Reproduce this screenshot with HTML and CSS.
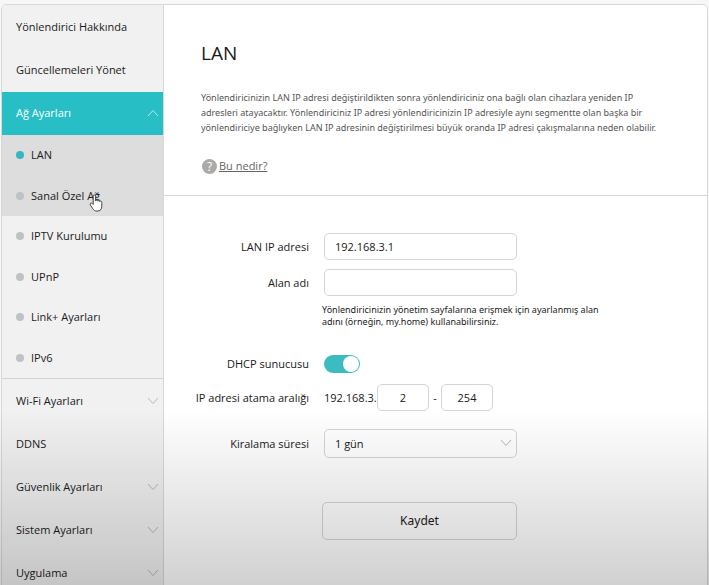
FILE: index.html
```html
<!DOCTYPE html>
<html lang="tr">
<head>
<meta charset="utf-8">
<meta name="viewport" content="width=device-width, initial-scale=1">
<title>LAN</title>
<link rel="stylesheet" href="styles.css">
</head>
<body>
<div class="panel">
  <nav class="sidebar">
    <ul class="menu menu-top">
      <li><a class="menu-link" href="#about">Yönlendirici Hakkında</a></li>
      <li><a class="menu-link" href="#updates">Güncellemeleri Yönet</a></li>
      <li><a class="menu-link active" href="#network">Ağ Ayarları
        <svg class="chevron" viewBox="0 0 12 8"><path d="M1 7 6 1.5 11 7"/></svg></a></li>
    </ul>
    <ul class="menu submenu">
      <li class="shaded"><a class="sub-link current" href="#lan">LAN</a></li>
      <li class="shaded"><a class="sub-link" href="#vpn">Sanal Özel Ağ</a>
        <svg class="pointer" viewBox="0 0 14 18"><path d="M4.2 10.5V2.2C4.2.6 6.6.6 6.6 2.2V7c0-1.2 2.1-1.1 2.1.2.2-1 2.1-.9 2.1.4.3-.9 2-.7 2 .7v3.9c0 3-1.5 4.9-4.6 4.9-2.3 0-3.6-1-4.6-2.7L1.3 10.9C.5 9.6 2.1 8.4 3.2 9.5z"/></svg></li>
      <li><a class="sub-link" href="#iptv">IPTV Kurulumu</a></li>
      <li><a class="sub-link" href="#upnp">UPnP</a></li>
      <li><a class="sub-link" href="#link">Link+ Ayarları</a></li>
      <li><a class="sub-link" href="#ipv6">IPv6</a></li>
    </ul>
    <ul class="menu menu-bottom">
      <li><a class="menu-link" href="#wifi">Wi-Fi Ayarları
        <svg class="chevron" viewBox="0 0 12 8"><path d="M1 1 6 6.5 11 1"/></svg></a></li>
      <li><a class="menu-link" href="#ddns">DDNS</a></li>
      <li><a class="menu-link" href="#security">Güvenlik Ayarları
        <svg class="chevron" viewBox="0 0 12 8"><path d="M1 1 6 6.5 11 1"/></svg></a></li>
      <li><a class="menu-link" href="#system">Sistem Ayarları
        <svg class="chevron" viewBox="0 0 12 8"><path d="M1 1 6 6.5 11 1"/></svg></a></li>
      <li><a class="menu-link" href="#app">Uygulama
        <svg class="chevron" viewBox="0 0 12 8"><path d="M1 1 6 6.5 11 1"/></svg></a></li>
    </ul>
  </nav>
  <main class="content">
    <header class="intro">
      <h1>LAN</h1>
      <p>Yönlendiricinizin LAN IP adresi değiştirildikten sonra yönlendiriciniz ona bağlı olan cihazlara yeniden IP<br>adresleri atayacaktır. Yönlendiriciniz IP adresi yönlendiricinizin IP adresiyle aynı segmentte olan başka bir<br>yönlendiriciye bağlıyken LAN IP adresinin değiştirilmesi büyük oranda IP adresi çakışmalarına neden olabilir.</p>
      <div class="help"><span class="help-icon" aria-hidden="true">?</span><a href="#help">Bu nedir?</a></div>
    </header>
    <form class="settings">
      <label for="ip">LAN IP adresi</label>
      <input class="field" id="ip" type="text" value="192.168.3.1">
      <label for="domain">Alan adı</label>
      <input class="field" id="domain" type="text">
      <p class="hint">Yönlendiricinizin yönetim sayfalarına erişmek için ayarlanmış alan<br>adını (örneğin, my.home) kullanabilirsiniz.</p>
      <label for="dhcp">DHCP sunucusu</label>
      <input class="switch" id="dhcp" type="checkbox" checked>
      <label for="start">IP adresi atama aralığı</label>
      <div class="range"><span>192.168.3.</span><input class="field short" id="start" type="text" value="2"><span class="dash">-</span><input class="field short" type="text" value="254" aria-label="IP"></div>
      <label for="lease">Kiralama süresi</label>
      <div class="select-wrap"><select class="field" id="lease"><option>1 gün</option></select>
        <svg class="chevron" viewBox="0 0 12 8"><path d="M1 1 6 6.5 11 1"/></svg></div>
      <button class="save" type="button">Kaydet</button>
    </form>
  </main>
</div>
<div class="fade"></div>
</body>
</html>
```
FILE: styles.css
```css
* { box-sizing: border-box; }
body {
  margin: 0;
  height: 100vh;
  overflow: hidden;
  padding: 4px 1px 0;
  background: #f7f7f7;
  color: #1a1a1a;
  font: 11px/16px "Open Sans", "Noto Sans", sans-serif;
}
.panel {
  display: flex;
  border: 1px solid #d8d8d8;
  border-radius: 5px;
  background: #fff;
  overflow: hidden;
}
.sidebar {
  flex: 0 0 162px;
  background: #f1f1f1;
  border-right: 1px solid #d8d8d8;
}
.menu { display: grid; grid-auto-rows: 1fr; margin: 0; padding: 0; list-style: none; }
.menu-top { height: 130px; }
.submenu { height: 243px; }
.menu-bottom { height: 217px; border-top: 1px solid #d4d4d4; }
.menu li { position: relative; }
.menu-link, .sub-link {
  display: flex;
  align-items: center;
  height: 100%;
  padding: 0 4px 0 14px;
  color: inherit;
  text-decoration: none;
}
.menu-link { justify-content: space-between; }
.menu-link.active { background: #27bec5; color: #fff; }
.chevron { width: 12px; height: 8px; fill: none; stroke: #b8b8b8; stroke-width: 1; }
.active .chevron { stroke: #b5eaec; }
.shaded { background: #ddd; }
.sub-link { gap: 7px; }
.sub-link::before { content: ""; width: 8px; height: 8px; border-radius: 50%; background: #c0c1c3; }
.sub-link.current::before { background: #35b7bd; }
.pointer { position: absolute; left: 87px; top: 18px; width: 14px; height: 18px; fill: #fff; stroke: #444; stroke-width: 1; }
.content { flex: 1; min-width: 0; }
.intro { padding: 33px 37px 21px; border-bottom: 1px solid #d8d8d8; }
h1 { margin: 0; font-size: 19px; line-height: 30px; font-weight: 400; }
.intro p { margin: 22px 0 0; font: 9px/15px "Noto Sans", "Open Sans", sans-serif; color: #555; white-space: nowrap; }
.help { display: flex; align-items: center; gap: 2px; margin-top: 23px; color: #666; }
.help a { color: inherit; }
.help-icon { width: 15px; height: 15px; margin-left: 1px; border-radius: 50%; background: #aaa; color: #fff; font-size: 12px; line-height: 15px; text-align: center; }
.settings {
  display: grid;
  grid-template-columns: 108px 193px;
  column-gap: 15px;
  align-items: center;
  padding: 37px 36px 54px 37px;
}
.settings label { justify-self: end; white-space: nowrap; }
.field {
  width: 100%;
  height: 27px;
  padding: 0 10px;
  border: 1px solid #d5d5d5;
  border-radius: 5px;
  background: #fff;
  color: inherit;
  font: inherit;
}
#domain, label[for="domain"] { margin-top: 9px; }
.hint { grid-column: 2; margin: 8px 0 0 -2px; font: 9px/12px "Noto Sans", "Open Sans", sans-serif; white-space: nowrap; }
.switch, label[for="dhcp"] { margin: 27px 0 0; }
.switch {
  appearance: none;
  width: 36px;
  height: 18px;
  padding: 1px;
  border-radius: 9px;
  background: #3cbcc0;
}
.switch::before { content: ""; display: block; width: 16px; height: 16px; margin-left: 18px; border-radius: 50%; background: #fff; }
.range, label[for="start"] { margin-top: 11px; }
.range { display: flex; align-items: center; }
.short { width: 52px; text-align: center; flex: none; }
.range span { flex: none; width: 53px; }
.range .dash { width: 12px; text-align: center; }
.select-wrap, label[for="lease"] { margin-top: 18px; }
.select-wrap { position: relative; }
.select-wrap .field { display: block; height: 29px; appearance: none; }
.select-wrap .chevron { position: absolute; right: 5px; top: 10px; pointer-events: none; }
.save {
  grid-column: 2;
  height: 38px;
  margin: 44px 0 0 -2px;
  border: 1px solid #d5d5d5;
  border-radius: 5px;
  background: transparent;
  color: inherit;
  font: 12px/18px "Noto Sans", "Open Sans", sans-serif;
}
.fade {
  position: fixed;
  inset: auto 0 0;
  height: 175px;
  background: linear-gradient(rgba(0, 0, 0, 0), rgba(0, 0, 0, .18));
  pointer-events: none;
}
```
